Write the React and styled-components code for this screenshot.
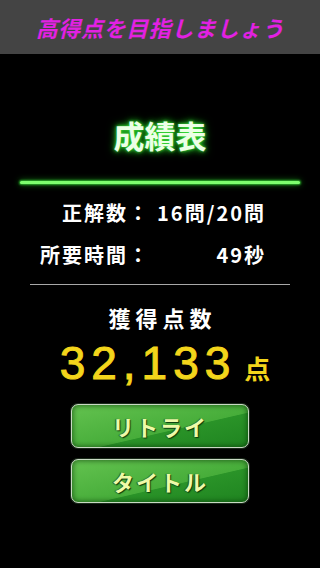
import styled, { createGlobalStyle } from 'styled-components';

const GlobalStyle = createGlobalStyle`
  html, body {
    margin: 0;
    padding: 0;
    background: #000;
  }
  body {
    font-family: 'Noto Sans CJK JP', 'Noto Sans', sans-serif;
  }
`;

const Screen = styled.div`
  width: 320px;
  height: 568px;
  background: #000;
  display: flex;
  flex-direction: column;
  overflow: hidden;
`;

const Header = styled.header`
  height: 54px;
  background: #444;
  display: flex;
  align-items: center;
  justify-content: center;
  color: #e221e2;
  font-size: 22px;
  font-weight: 700;
  font-style: italic;
  letter-spacing: 0.6px;
`;

const Title = styled.h1`
  margin: 66px 0 0;
  font-size: 31px;
  line-height: 30px;
  font-weight: 700;
  text-align: center;
  color: #ecffe6;
  text-shadow: 0 0 3px #3ee83e, 0 0 6px #22b822, 0 0 10px #158a15;
`;

const GlowLine = styled.div`
  height: 3px;
  margin: 31px 20px 0;
  background: #7dff6e;
  border-radius: 2px;
  box-shadow: 0 0 2px 1px #2aa82a, 0 0 6px 1px #106010;
`;

const Stats = styled.dl`
  margin: 8px 0 0;
  display: grid;
  grid-template-columns: 150px 116px;
  line-height: 42px;
  font-size: 20px;
  font-weight: 700;
  color: #fff;
  letter-spacing: 2px;
`;

const Label = styled.dt`
  margin: 0;
  text-align: right;
`;

const Value = styled.dd`
  margin: 0;
  text-align: right;
`;

const Divider = styled.hr`
  margin: 8px 30px 0;
  border: none;
  height: 1px;
  background: #a8a8a8;
`;

const ScoreLabel = styled.h2`
  margin: 17px 0 0;
  font-size: 22px;
  line-height: 30px;
  font-weight: 700;
  text-align: center;
  color: #fff;
  letter-spacing: 5px;
  padding-left: 5px;
`;

const Score = styled.div`
  margin-top: 8px;
  height: 46px;
  display: flex;
  align-items: baseline;
  justify-content: center;
  color: #f3d51b;
  padding-left: 10px;
`;

const Digits = styled.span`
  font-family: 'Liberation Sans', Arial, sans-serif;
  font-size: 46px;
  line-height: 46px;
  font-weight: 400;
  -webkit-text-stroke: 1px #f3d51b;
  letter-spacing: 6px;
`;

const Unit = styled.span`
  font-size: 26px;
  font-weight: 700;
  margin-left: 8px;
`;

const Buttons = styled.div`
  margin-top: 18px;
  display: flex;
  flex-direction: column;
  align-items: center;
  gap: 11px;
`;

const GreenButton = styled.button`
  width: 178px;
  height: 44px;
  padding: 0;
  border: 1px solid #c9d9c4;
  border-radius: 7px;
  background: linear-gradient(167deg, #63c24f 0%, #47ad3a 58%, #2a9328 59%, #1f8420 100%);
  box-shadow: inset 0 0 5px 1px rgba(0, 40, 0, 0.55), 0 0 0 1px #1a2a1a;
  font-family: 'Noto Sans CJK JP', sans-serif;
  font-size: 22px;
  font-weight: 700;
  letter-spacing: 2px;
  color: #eefaa8;
  text-shadow: 1px 1px 1px #0c3a0c, -1px 0 1px #1d5a1d;
  cursor: pointer;
`;

export default function App() {
  return (
    <>
      <GlobalStyle />
      <Screen>
        <Header>高得点を目指しましょう</Header>
        <Title>成績表</Title>
        <GlowLine />
        <Stats>
          <Label>正解数：</Label>
          <Value>16問/20問</Value>
          <Label>所要時間：</Label>
          <Value>49秒</Value>
        </Stats>
        <Divider />
        <ScoreLabel>獲得点数</ScoreLabel>
        <Score>
          <Digits>32,133</Digits>
          <Unit>点</Unit>
        </Score>
        <Buttons>
          <GreenButton>リトライ</GreenButton>
          <GreenButton>タイトル</GreenButton>
        </Buttons>
      </Screen>
    </>
  );
}
